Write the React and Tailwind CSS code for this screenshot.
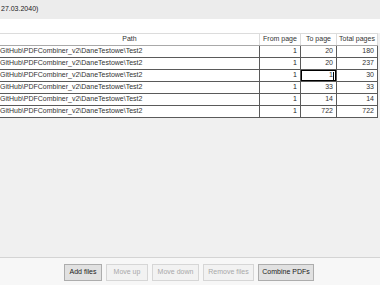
const rows = [
  { path: "GitHub\\PDFCombiner_v2\\DaneTestowe\\Test2", from: 1, to: 20, total: 180 },
  { path: "GitHub\\PDFCombiner_v2\\DaneTestowe\\Test2", from: 1, to: 20, total: 237 },
  { path: "GitHub\\PDFCombiner_v2\\DaneTestowe\\Test2", from: 1, to: 1, total: 30, editing: true },
  { path: "GitHub\\PDFCombiner_v2\\DaneTestowe\\Test2", from: 1, to: 33, total: 33 },
  { path: "GitHub\\PDFCombiner_v2\\DaneTestowe\\Test2", from: 1, to: 14, total: 14 },
  { path: "GitHub\\PDFCombiner_v2\\DaneTestowe\\Test2", from: 1, to: 722, total: 722 },
];

function Btn({ children, enabled, className }) {
  return (
    <button
      className={
        (enabled
          ? "h-[17px] border border-[#adadad] bg-[#e1e1e1] text-[#1a1a1a] "
          : "h-[17px] border border-[#d6d6d6] bg-[#f2f2f2] text-[#a8a8a8] ") + className
      }
    >
      {children}
    </button>
  );
}

export default function App() {
  return (
    <div
      className="w-[380px] h-[285px] overflow-hidden flex flex-col bg-[#f0f0f0] text-[7px] text-[#1a1a1a]"
      style={{ fontFamily: '"Liberation Sans", Arial, sans-serif' }}
    >
      {/* status band */}
      <div className="h-[19px] bg-[#ececec] flex items-center pl-[1px]">27.03.2040)</div>
      <div className="h-[14px] bg-white" />

      {/* grid */}
      <div className="flex-1 flex flex-col">
        <div className="flex h-[13px] w-[378px] bg-white border-t border-[#dcdcdc] border-b border-b-[#a9a9a9] text-[#333]">
          <div className="w-[260px] border-r border-[#dcdcdc] flex items-center justify-center">Path</div>
          <div className="w-[41px] border-r border-[#dcdcdc] flex items-center justify-center">From page</div>
          <div className="w-[36px] border-r border-[#dcdcdc] flex items-center justify-center">To page</div>
          <div className="w-[41px] border-r border-[#dcdcdc] flex items-center justify-center">Total pages</div>
        </div>
        {rows.map((r, i) => (
          <div key={i} className="flex h-[12px] w-[378px] bg-white border-b border-[#5a5a5a] text-[#333]">
            <div className="w-[260px] border-r border-[#5a5a5a] flex items-center whitespace-nowrap overflow-hidden">
              {r.path}
            </div>
            <div className="w-[41px] border-r border-[#5a5a5a] flex items-center justify-end pr-[3px] text-[#1a1a1a]">{r.from}</div>
            {r.editing ? (
              <div className="w-[36px] border-r border-[#5a5a5a] flex items-center justify-end pr-[2px] shadow-[inset_0_0_0_1px_#000]">
                <span>{r.to}</span>
                <span className="w-px h-[8px] bg-black" />
              </div>
            ) : (
              <div className="w-[36px] border-r border-[#5a5a5a] flex items-center justify-end pr-[3px]">{r.to}</div>
            )}
            <div className="w-[41px] border-r border-[#5a5a5a] flex items-center justify-end pr-[3px]">{r.total}</div>
          </div>
        ))}
      </div>

      {/* buttons */}
      <div className="h-[28px] border-t border-[#d4d4d4] bg-[#f7f7f7] flex items-start pt-[6px] pl-[64px] gap-[4px]">
        <Btn enabled className="w-[38px]">Add files</Btn>
        <Btn className="w-[42px]">Move up</Btn>
        <Btn className="w-[47px]">Move down</Btn>
        <Btn className="w-[51px]">Remove files</Btn>
        <Btn enabled className="w-[56px]">Combine PDFs</Btn>
      </div>
    </div>
  );
}
